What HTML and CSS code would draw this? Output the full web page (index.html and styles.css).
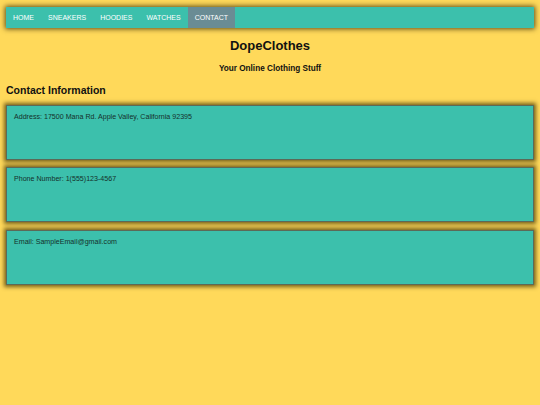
FILE: index.html
```html
<!DOCTYPE html>
<html>
<head>
<meta charset="utf-8">
<link rel="stylesheet" href="styles.css">
</head>
<body>
<nav class="nav">
  <a class="nav-item" href="#">HOME</a>
  <a class="nav-item" href="#">SNEAKERS</a>
  <a class="nav-item" href="#">HOODIES</a>
  <a class="nav-item" href="#">WATCHES</a>
  <a class="nav-item active" href="#">CONTACT</a>
</nav>
<h1 class="title">DopeClothes</h1>
<p class="subtitle">Your Online Clothing Stuff</p>
<h2 class="section">Contact Information</h2>
<div class="card">Address: 17500 Mana Rd. Apple Valley, California 92395</div>
<div class="card">Phone Number: 1(555)123-4567</div>
<div class="card card-last">Email: SampleEmail@gmail.com</div>
</body>
</html>
```
FILE: styles.css
```css
html, body {
  margin: 0;
  padding: 0;
}
body {
  background: #ffd95a;
  font-family: "Comic Sans MS", "Liberation Sans", sans-serif;
  padding: 7px 6px;
  color: #111;
}
.nav {
  display: flex;
  background: #3cc0ac;
  height: 21px;
  box-shadow: 0 0 5px 1px rgba(40, 30, 0, 0.75);
}
.nav-item {
  display: flex;
  align-items: center;
  padding: 0 7px;
  color: #fff;
  text-decoration: none;
  font-size: 7px;
}
.nav-item.active {
  background: #6a8c94;
}
.title {
  text-align: center;
  font-size: 13px;
  font-weight: bold;
  margin: 9px 0 0;
  line-height: 17px;
}
.subtitle {
  text-align: center;
  font-size: 8.2px;
  font-weight: bold;
  margin: 9px 0 0;
  line-height: 12px;
}
.section {
  font-size: 10.5px;
  font-weight: bold;
  margin: 8px 0 0;
  line-height: 15px;
}
.card {
  background: #3cc0ac;
  border: 1px solid #5c6a58;
  box-shadow: 0 0 4px 2px rgba(60, 45, 0, 0.7);
  height: 40px;
  padding: 7px 7px 6px;
  font-size: 7.1px;
  margin-top: 7px;
  color: #15302b;
}
.card-last {
  margin-top: 8px;
}
```
